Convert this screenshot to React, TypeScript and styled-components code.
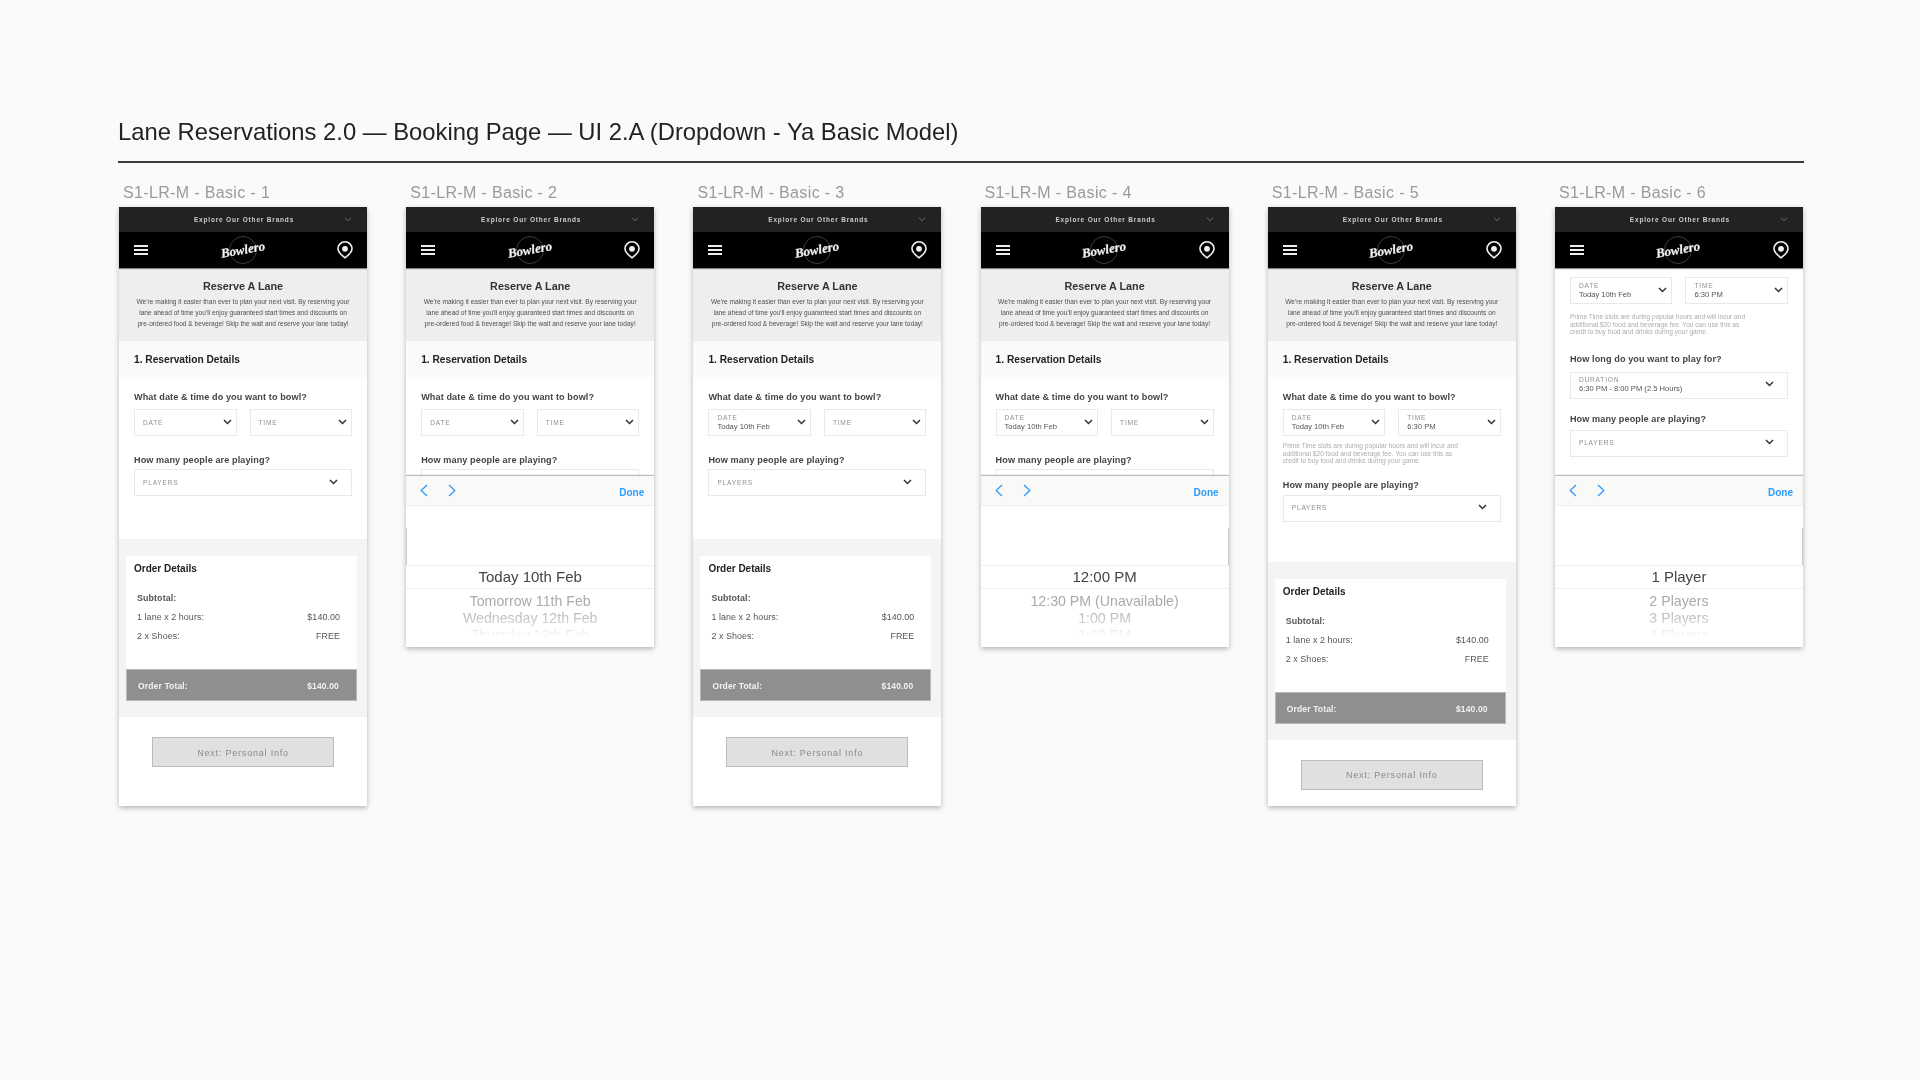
import React from "react";
import styled, { createGlobalStyle } from "styled-components";

const Global = createGlobalStyle`
  html, body { margin: 0; padding: 0; background: #fafafa; }
  body { font-family: "Liberation Sans", Arial, sans-serif; }
`;

const Page = styled.main`
  width: 1920px; height: 1080px; box-sizing: border-box; overflow: hidden;
  padding: 117px 116px 0 118px; background: #fafafa; filter: blur(0.35px);
`;
const Title = styled.h1`
  margin: 0; font-size: 23.8px; line-height: 30px; font-weight: 400; color: #222;
`;
const Rule = styled.hr`
  margin: 14px 0 0; border: 0; height: 2px; background: #3a3a3a;
`;
const Row = styled.div`
  display: flex; gap: 39.2px; padding: 20px 0 0 1px;
`;
const Column = styled.section`
  width: 248px; flex: none;
`;
const ArtboardLabel = styled.div`
  padding-left: 4px; height: 24px; font-size: 16px; line-height: 20px; color: #9a9a9a; letter-spacing: 0.35px;
`;
const Phone = styled.div<{ $short?: boolean }>`
  position: relative; width: 248px; height: ${p => (p.$short ? 440 : 599)}px; background: #fff; overflow: hidden;
  box-shadow: 0 2px 5px rgba(0, 0, 0, 0.28);
`;
const BrandBar = styled.div`
  position: relative; height: 25px; box-sizing: border-box; padding-left: 2px; background: #222; color: #ccc; display: flex; align-items: center; justify-content: center;
  font-size: 6.5px; font-weight: 700; letter-spacing: 0.82px;
  svg { position: absolute; right: 15px; top: 10px; }
`;
const NavBar = styled.div`
  height: 36px; background: #000; display: flex; align-items: center; justify-content: space-between; padding: 0 14px 0 15px;
  box-shadow: 0 1px 1px rgba(0,0,0,.45); position: relative;
`;
const Burger = styled.div`
  width: 14px; height: 9.5px; display: flex; flex-direction: column; justify-content: space-between;
  i { display: block; height: 1.5px; background: #eee; }
`;
const Intro = styled.div`
  height: 73px; box-sizing: border-box; padding-top: 11px; background: #eee; text-align: center;
`;
const IntroTitle = styled.h2`
  margin: 0 0 3px; font-size: 10.8px; line-height: 14px; font-weight: 700; color: #333;
`;
const IntroText = styled.p`
  margin: 0; font-size: 6.6px; line-height: 11.2px; color: #505050;
`;
const SectionHead = styled.div`
  height: 36px; box-sizing: border-box; padding: 0 15px; display: flex; align-items: center; background: #fafafa;
  font-size: 10.2px; font-weight: 700; color: #222;
`;
const Form = styled.div<{ $top: number; $tail: number }>`
  padding: ${p => p.$top}px 15px ${p => p.$tail}px;
`;
const Question = styled.div<{ $gap: number }>`
  margin-top: ${p => p.$gap}px; font-size: 9.1px; line-height: 14px; font-weight: 700; color: #444; letter-spacing: 0.1px;
`;
const Pair = styled.div<{ $gap: number }>`
  margin-top: ${p => p.$gap}px; display: grid; grid-template-columns: 1fr 1fr; gap: 13px;
`;
const SelectBox = styled.div<{ $gap?: number; $wide?: boolean }>`
  position: relative; height: 27px; box-sizing: border-box; margin-top: ${p => p.$gap ?? 0}px;
  border: 1.4px solid #e9e9e9; background: #fff; padding: 0 8px; display: flex; flex-direction: column; justify-content: center;
  svg { position: absolute; right: ${p => (p.$wide ? 13 : 4)}px; top: 8.5px; }
`;
const Tag = styled.span`
  font-size: 6.6px; line-height: 8px; color: #8f8f8f; letter-spacing: 0.8px; text-transform: uppercase;
`;
const Value = styled.span`
  font-size: 7.6px; line-height: 10px; color: #555;
`;
const Hint = styled.p<{ $top: number; $bottom: number }>`
  margin: ${p => p.$top}px 10px ${p => p.$bottom}px 0; font-size: 6.6px; line-height: 7.5px; color: #adadad;
`;
const OrderBand = styled.div`
  padding: 17px 10px 16px 7px; background: #f4f4f4;
`;
const Card = styled.div`
  height: 113px; box-sizing: border-box; padding: 6px 17px 0 8px; background: #fff;
`;
const CardTitle = styled.div`
  height: 15px; font-size: 10px; line-height: 14px; font-weight: 700; color: #222;
`;
const SubTotal = styled.div`
  margin: 15px 0 0 3px; font-size: 8.9px; line-height: 12px; font-weight: 700; color: #555; letter-spacing: 0.1px;
`;
const Line = styled.div`
  margin: 7px 0 0 3px; display: flex; justify-content: space-between; font-size: 8.9px; line-height: 12px; color: #555; letter-spacing: 0.08px;
`;
const Total = styled.div`
  height: 32px; box-sizing: border-box; padding: 2px 17px 0 11px; display: flex; align-items: center; justify-content: space-between;
  background: #8f8f8f; border: 1px solid #b9b9b9; color: #f2f2f2; font-size: 8.5px; font-weight: 700; letter-spacing: 0.15px;
`;
const ButtonWrap = styled.div`
  padding: 20px 33px 0;
`;
const NextButton = styled.div`
  height: 30px; box-sizing: border-box; padding-top: 1px; display: flex; align-items: center; justify-content: center; background: #e0e0e0;
  border: 1.5px solid #bbb; color: #8a8a8a; font-size: 9px; letter-spacing: 0.8px;
`;
const Sheet = styled.div`
  position: absolute; left: 0; right: 0; bottom: 0; height: 171px; background: #fff; box-shadow: 0 -1px 1px rgba(0,0,0,.28);
`;
const SheetBar = styled.div`
  height: 30px; box-sizing: border-box; display: flex; align-items: center; gap: 20px; padding: 0 10px 0 14px; background: #f9f9f7;
  border-bottom: 1px solid #f0f0f0;
`;
const Done = styled.span`
  margin-left: auto; padding-top: 4px; font-size: 10px; font-weight: 700; color: #2d9cfc;
`;
const Wheel = styled.div<{ $edge?: "left" | "right" }>`
  position: relative; padding-top: 59px; text-align: center;
  &::before { content: ""; position: absolute; top: 22px; height: 37px; width: 1px; background: #ccc; ${p => p.$edge ?? "right"}: 0; }
`;
const Selected = styled.div`
  height: 24px; box-sizing: border-box; padding-top: 1px; border-top: 1.5px solid #efefef; border-bottom: 1.5px solid #efefef;
  font-size: 15px; line-height: 20px; color: #444;
`;
const Options = styled.div`
  height: 48px; padding-top: 4px; box-sizing: border-box; overflow: hidden;
  -webkit-mask-image: linear-gradient(#000 0, #000 30%, rgba(0,0,0,.7) 60%, rgba(0,0,0,.35) 80%, transparent 100%);
  mask-image: linear-gradient(#000 0, #000 30%, rgba(0,0,0,.7) 60%, rgba(0,0,0,.35) 80%, transparent 100%);
  div { font-size: 14.2px; line-height: 17px; color: #aaa; }
`;

const Chevron = ({ thin }: { thin?: boolean }) => (
  <svg width={thin ? 8 : 9} height={thin ? 5 : 6} viewBox="0 0 9 6" fill="none" stroke={thin ? "#888" : "#333"} strokeWidth={thin ? 0.9 : 1.5}>
    <path d="M1 1l3.5 3.5L8 1" />
  </svg>
);
const Arrow = ({ dir }: { dir: "l" | "r" }) => (
  <svg width="8" height="13" viewBox="0 0 8 13" fill="none" stroke="#2d9cfc" strokeWidth="1.3">
    <path d={dir === "l" ? "M7 1L1.2 6.5 7 12" : "M1 1l5.8 5.5L1 12"} />
  </svg>
);
const Pin = () => (
  <svg width="16" height="18" viewBox="0 0 16 18">
    <path d="M8 16.8C3.6 13.6 1 11 1 7.8A7 7 0 0 1 15 7.8C15 11 12.4 13.6 8 16.8Z" fill="none" stroke="#f2f2f2" strokeWidth="1.6" />
    <circle cx="8" cy="7.8" r="2.9" fill="#f2f2f2" />
  </svg>
);
const Logo = () => (
  <svg width="56" height="30" viewBox="0 0 56 30">
    <circle cx="28" cy="15" r="13.5" fill="none" stroke="#555" strokeWidth="0.7" />
    <text x="28" y="19" textAnchor="middle" transform="rotate(-10 28 15)" fontFamily="Liberation Serif, serif" fontStyle="italic" fontWeight="700" fontSize="13" fill="#f4f4f4" stroke="#f4f4f4" strokeWidth="0.2">Bowlero</text>
  </svg>
);

const Select = ({ tag, value, gap, wide }: { tag: string; value?: string; gap?: number; wide?: boolean }) => (
  <SelectBox $gap={gap} $wide={wide}>
    <Tag>{tag}</Tag>
    {value && <Value>{value}</Value>}
    <Chevron />
  </SelectBox>
);

const Header = () => (
  <>
    <BrandBar>Explore Our Other Brands<Chevron thin /></BrandBar>
    <NavBar>
      <Burger><i /><i /><i /></Burger>
      <Logo />
      <Pin />
    </NavBar>
  </>
);

const PageIntro = () => (
  <>
    <Intro>
      <IntroTitle>Reserve A Lane</IntroTitle>
      <IntroText>
        We're making it easier than ever to plan your next visit. By reserving your<br />
        lane ahead of time you'll enjoy guaranteed start times and discounts on<br />
        pre-ordered food &amp; beverage! Skip the wait and reserve your lane today!
      </IntroText>
    </Intro>
    <SectionHead>1. Reservation Details</SectionHead>
  </>
);

const hintText = (
  <>
    Prime Time slots are during popular hours and will incur and<br />
    additional $20 food and beverage fee. You can use this as<br />
    credit to buy food and drinks during your game.
  </>
);

const Order = () => (
  <>
    <OrderBand>
      <Card>
        <CardTitle>Order Details</CardTitle>
        <SubTotal>Subtotal:</SubTotal>
        <Line><span>1 lane x 2 hours:</span><span>$140.00</span></Line>
        <Line><span>2 x Shoes:</span><span>FREE</span></Line>
      </Card>
      <Total><span>Order Total:</span><span>$140.00</span></Total>
    </OrderBand>
    <ButtonWrap><NextButton>Next: Personal Info</NextButton></ButtonWrap>
  </>
);

const Picker = ({ selected, options, edge }: { selected: string; options: string[]; edge?: "left" | "right" }) => (
  <Sheet>
    <SheetBar><Arrow dir="l" /><Arrow dir="r" /><Done>Done</Done></SheetBar>
    <Wheel $edge={edge}>
      <Selected>{selected}</Selected>
      <Options>{options.map(o => <div key={o}>{o}</div>)}</Options>
    </Wheel>
  </Sheet>
);

const Booking = ({ date, time, hint }: { date?: string; time?: string; hint?: boolean }) => (
  <>
    <PageIntro />
    <Form $top={13} $tail={hint ? 40 : 43}>
      <Question $gap={0}>What date &amp; time do you want to bowl?</Question>
      <Pair $gap={5}>
        <Select tag="Date" value={date} />
        <Select tag="Time" value={time} />
      </Pair>
      {hint && <Hint $top={6} $bottom={-4}>{hintText}</Hint>}
      <Question $gap={17}>How many people are playing?</Question>
      <Select tag="Players" gap={hint ? 3 : 2} wide />
    </Form>
  </>
);

const frames = [1, 2, 3, 4, 5, 6];

const Screen = ({ n }: { n: number }) => {
  switch (n) {
    case 1:
      return <Phone><Header /><Booking /><Order /></Phone>;
    case 2:
      return (
        <Phone $short><Header /><Booking />
          <Picker edge="left" selected="Today 10th Feb" options={["Tomorrow 11th Feb", "Wednesday 12th Feb", "Thursday 13th Feb"]} />
        </Phone>
      );
    case 3:
      return <Phone><Header /><Booking date="Today 10th Feb" /><Order /></Phone>;
    case 4:
      return (
        <Phone $short><Header /><Booking date="Today 10th Feb" />
          <Picker selected="12:00 PM" options={["12:30 PM (Unavailable)", "1:00 PM", "1:30 PM"]} />
        </Phone>
      );
    case 5:
      return <Phone><Header /><Booking date="Today 10th Feb" time="6:30 PM" hint /><Order /></Phone>;
    default:
      return (
        <Phone $short><Header />
          <Form $top={9} $tail={0}>
            <Pair $gap={0}>
              <Select tag="Date" value="Today 10th Feb" />
              <Select tag="Time" value="6:30 PM" />
            </Pair>
            <Hint $top={9} $bottom={-4}>{hintText}</Hint>
            <Question $gap={20}>How long do you want to play for?</Question>
            <Select tag="Duration" value="6:30 PM - 8:00 PM (2.5 Hours)" gap={6} wide />
            <Question $gap={13}>How many people are playing?</Question>
            <Select tag="Players" gap={4} wide />
          </Form>
          <Picker selected="1 Player" options={["2 Players", "3 Players", "4 Players"]} />
        </Phone>
      );
  }
};

export default function App() {
  return (
    <Page>
      <Global />
      <Title>Lane Reservations 2.0 — Booking Page — UI 2.A (Dropdown - Ya Basic Model)</Title>
      <Rule />
      <Row>
        {frames.map(n => (
          <Column key={n}>
            <ArtboardLabel>S1-LR-M - Basic - {n}</ArtboardLabel>
            <Screen n={n} />
          </Column>
        ))}
      </Row>
    </Page>
  );
}
